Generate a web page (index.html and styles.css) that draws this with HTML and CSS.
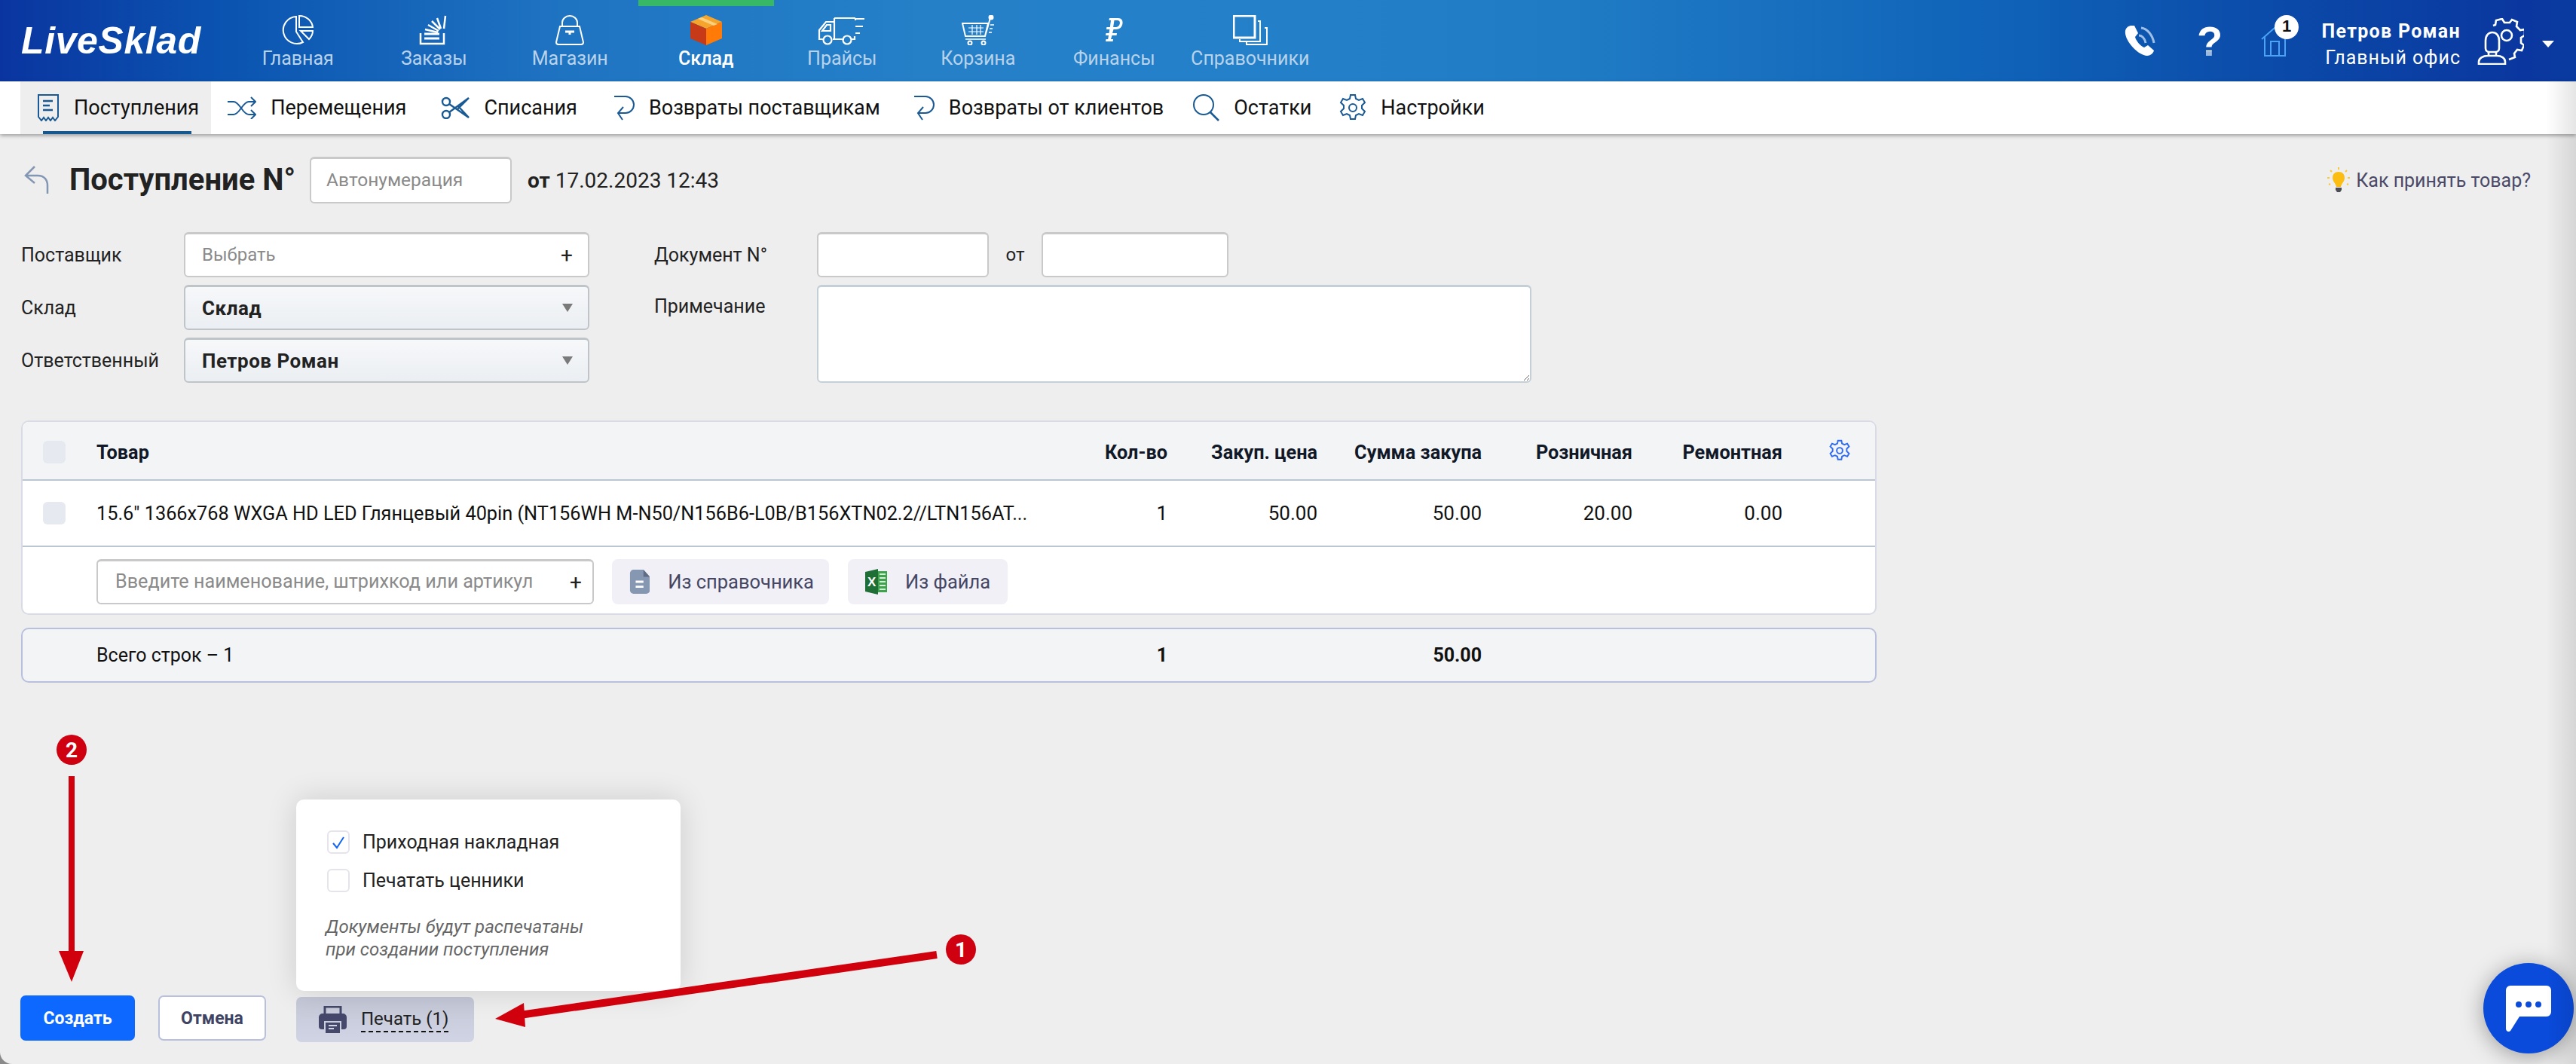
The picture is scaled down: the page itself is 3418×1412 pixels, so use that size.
FILE: index.html
```html
<!DOCTYPE html>
<html lang="ru">
<head>
    <meta charset="UTF-8">
    <title>Поступление</title>
    <link rel="stylesheet" href="styles.css">
</head>
<body>
<div class="page">

    <!--верхнее меню-->
    <header class="top">
        <div class="logo">LiveSklad</div>
        <nav class="nav">
            <a class="nav-item">
                <svg width="44" height="40" viewBox="0 0 44 40" fill="none" stroke="#fff" stroke-width="2"><path d="M20 2a18 18 0 1 0 9 34L20 22z"/><path d="M24 1c10 0 17 7 18 15H24z"/><path d="M26 21h16c0 4-2 8-5 11z"/></svg>
                <span>Главная</span>
            </a>
            <a class="nav-item">
                <svg width="40" height="40" viewBox="0 0 40 40" fill="none" stroke="#fff" stroke-width="3"><path d="M2 24v14h31V24" stroke-width="2.5"/><path d="M7 25h20M7 31h20" stroke-width="3"/><path d="M8 19l17 4M12 13l14 8M17 8l11 11M24 4l5 14M35 1l-2 17" stroke-width="2.5"/></svg>
                <span>Заказы</span>
            </a>
            <a class="nav-item">
                <svg width="40" height="40" viewBox="0 0 40 40" fill="none" stroke="#fff" stroke-width="2"><path d="M10 15V10a10 9 0 0 1 20 0v5"/><path d="M7 15h26l5 21a3 3 0 0 1-3 3H5a3 3 0 0 1-3-3z"/><path d="M14 22h12l-6 0M20 22v4" stroke-width="3"/></svg>
                <span>Магазин</span>
            </a>
            <a class="nav-item nav-item-active">
                <svg width="42" height="40" viewBox="0 0 42 40"><path d="M21 0l21 9-21 9L0 9z" fill="#f6a52c"/><path d="M0 9l21 9v22L0 31z" fill="#c63a17"/><path d="M42 9L21 18v22l21-9z" fill="#ff7a06"/><path d="M10 5l21 9 5-2L15 3z" fill="#fbd07c"/></svg>
                <span>Склад</span>
            </a>
            <a class="nav-item">
                <svg width="64" height="40" viewBox="0 0 64 40" fill="none" stroke="#fff" stroke-width="2.2"><path d="M20 32h15M8 32H2V20l9-11h11v23M22 4v5M22 4h28M50 4v3M44 32h5V28"/><circle cx="13" cy="33" r="5.5"/><circle cx="39" cy="33" r="5.5"/><path d="M50 5h12M50 15h10M50 24h6"/><path d="M6 21l6-8h5v8z"/></svg>
                <span>Прайсы</span>
            </a>
            <a class="nav-item">
                <svg width="44" height="40" viewBox="0 0 44 40" fill="none" stroke="#fff" stroke-width="2"><path d="M1 11h34l-4 17H5zM31 28l7-24"/><circle cx="39" cy="3" r="2.5" fill="#fff"/><path d="M5 32h27" stroke-width="1.5"/><circle cx="11" cy="37" r="2.5"/><circle cx="29" cy="37" r="2.5"/><path d="M9 17h20M9 22h20M14 13v13M20 13v13M25 13v13" stroke-width="1.2"/><path d="M38 13h5M37 18h4M36 23h4" stroke-width="1.4"/></svg>
                <span>Корзина</span>
            </a>
            <a class="nav-item">
                <svg width="24" height="36" viewBox="0 0 24 36" fill="#fff"><path d="M9 2h8.500c4.500 0 6.500 3 6 7-.6 5-4 8-9 8h-3L10 22h6l-.5 3h-6L8 30h3l-.4 3H1l.5-3h2.700l.8-5H1l.5-3h4l.8-5H2l.4-3h4.400L8 5H5.500l.5-3zM12.500 5l-1.400 9h2.900c3 0 5.500-2 5.900-5 .3-2.500-1-4-3.500-4z"/></svg>
                <span>Финансы</span>
            </a>
            <a class="nav-item">
                <svg width="46" height="40" viewBox="0 0 46 40" fill="none" stroke="#fff" stroke-width="2"><rect x="1" y="1" width="28" height="29" stroke-width="3"/><path d="M33 8h3v27H9v-3M42 17h3v22H18v-3"/></svg>
                <span>Справочники</span>
            </a>
        </nav>
        <div class="top-right">
            <svg class="top-phone" width="42" height="44" viewBox="0 0 42 44"><path d="M8 1l5 0 5 10-4 5c1 5 7 12 12 14l5-3 8 7c-1 4-5 7-9 7C18 41-1 20 1 8c1-4 3-6 7-7z" fill="#fff"/><path d="M19 14c4 0 8 4 9 10M22 4c8 1 15 9 17 20" fill="none" stroke="#9fc0e4" stroke-width="3"/></svg>
            <span class="top-help">?</span>
            <div class="top-home">
                <svg width="36" height="40" viewBox="0 0 36 40" fill="none" stroke="#4aa3f5" stroke-width="2"><path d="M1 17L18 2l17 15M5 14v25h27V14M13 39V20h11v19"/></svg>
                <span class="top-badge">1</span>
            </div>
            <div class="user">
                <div class="user-name">Петров Роман</div>
                <div class="user-office">Главный офис</div>
            </div>
            <svg class="user-icon" width="62" height="62" viewBox="0 0 62 62" fill="none" stroke="#fff" stroke-width="2.600"><path d="M21 10l3-1 1-6 8-2 3 5 7 0 3-4 7 3-1 6 5 5 6-1 0 8-5 3 0 7 4 3-3 7-6-1-4 5 1 5-8 3"/><circle cx="39" cy="23" r="7"/><path d="M11 30c0-7 4-11 9-11s9 4 9 11v10c0 3-2 5-5 5h-8c-3 0-5-2-5-5z"/><path d="M15 45v5M25 45v5M14 50h12c6 0 11 3 11 8v3H2v-3c0-5 6-8 12-8z"/></svg>
            <span class="user-caret"></span>
        </div>
    </header>

    <!--подменю-->
    <nav class="sub">
        <a class="sub-item sub-item-active">
            <svg width="30" height="36" viewBox="0 0 30 36" fill="none" stroke="#1a5a94" stroke-width="2"><path d="M2 1h26v29l-4 5-3-4-3 4-3-4-3 4-3-4-3 4-4-5z"/><path d="M8 9h13M8 15h9M8 21h13" stroke-width="2.500"/></svg>
            <span class="sub-label">Поступления</span>
        </a>
        <a class="sub-item">
            <svg width="38" height="30" viewBox="0 0 38 30" fill="none" stroke="#1a5a94" stroke-width="2"><path d="M0 7h8c8 0 12 17 20 17h8M0 24h8c8 0 12-17 20-17h8M31 1l6 6-6 6M31 18l6 6-6 6"/></svg>
            <span class="sub-label">Перемещения</span>
        </a>
        <a class="sub-item">
            <svg width="38" height="30" viewBox="0 0 38 30" fill="none" stroke="#1a5a94" stroke-width="2.400"><circle cx="7" cy="7" r="5"/><circle cx="7" cy="24" r="5"/><path d="M11 10l26 18-14-15M11 21L37 2 21 18"/></svg>
            <span class="sub-label">Списания</span>
        </a>
        <a class="sub-item">
            <svg width="28" height="36" viewBox="0 0 28 36" fill="none" stroke="#1a5a94" stroke-width="2"><path d="M1 3h15c6 0 11 5 11 11s-5 11-11 11H7"/><path d="M13 17l-7 8 6 9"/></svg>
            <span class="sub-label">Возвраты поставщикам</span>
        </a>
        <a class="sub-item">
            <svg width="28" height="36" viewBox="0 0 28 36" fill="none" stroke="#1a5a94" stroke-width="2"><path d="M1 3h15c6 0 11 5 11 11s-5 11-11 11H7"/><path d="M13 17l-7 8 6 9"/></svg>
            <span class="sub-label">Возвраты от клиентов</span>
        </a>
        <a class="sub-item">
            <svg width="36" height="36" viewBox="0 0 36 36" fill="none" stroke="#1a5a94" stroke-width="2"><circle cx="15" cy="14" r="13"/><path d="M24 24l11 11" stroke-width="2.500"/></svg>
            <span class="sub-label">Остатки</span>
        </a>
        <a class="sub-item">
            <svg width="36" height="36" viewBox="0 0 36 36" fill="none" stroke="#1a5a94" stroke-width="2"><path d="M15 1h6l1 5 4 2 5-2 3 5-4 4v4l4 4-3 5-5-2-4 2-1 5h-6l-1-5-4-2-5 2-3-5 4-4v-4L2 11l3-5 5 2 4-2z"/><circle cx="18" cy="18" r="5"/></svg>
            <span class="sub-label">Настройки</span>
        </a>
    </nav>

    <main class="main">
        <div class="title-row">
            <svg class="back" width="34" height="38" viewBox="0 0 34 38" fill="none" stroke="#8397b5" stroke-width="2.500"><path d="M14 1L2 13l12 10M2 13h16c9 0 13 6 13 13v11"/></svg>
            <h1 class="title">Поступление N°</h1>
            <div class="input auto-num"><span class="ph">Автонумерация</span></div>
            <div class="date"><b>от</b> 17.02.2023 12:43</div>
            <a class="help-link">
                <svg width="30" height="34" viewBox="0 0 30 34"><path d="M15 6c5 0 8 3 8 8 0 5-4 7-5 12h-6c-1-5-5-7-5-12 0-5 3-8 8-8z" fill="#fcbd13"/><path d="M11 27h8v3l-2 3h-4l-2-3z" fill="#4d4d55"/><path d="M15 0v3M4 4l2 2M26 4l-2 2M0 14h3M27 14h3M2 23l2-1M28 23l-2-1" stroke="#fcc733" stroke-width="2" fill="none"/></svg>
                <span>Как принять товар?</span>
            </a>
        </div>

        <section class="form">
            <div class="form-col">
                <div class="field">
                    <label class="field-label">Поставщик</label>
                    <div class="input field-box"><span class="ph">Выбрать</span><span class="plus">+</span></div>
                </div>
                <div class="field">
                    <label class="field-label">Склад</label>
                    <div class="input select field-box"><b>Склад</b><i class="arrow-down"></i></div>
                </div>
                <div class="field">
                    <label class="field-label">Ответственный</label>
                    <div class="input select field-box"><b>Петров Роман</b><i class="arrow-down"></i></div>
                </div>
            </div>
            <div class="form-col">
                <div class="field">
                    <label class="field-label">Документ N°</label>
                    <div class="input doc-num"></div>
                    <span class="doc-from">от</span>
                    <div class="input doc-date"></div>
                </div>
                <div class="field field-top">
                    <label class="field-label">Примечание</label>
                    <textarea class="note"></textarea>
                </div>
            </div>
        </section>

        <section class="tbl">
            <div class="tbl-row tbl-head">
                <div class="cell-check"><i class="check"></i></div>
                <div>Товар</div>
                <div class="num">Кол-во</div>
                <div class="num">Закуп. цена</div>
                <div class="num">Сумма закупа</div>
                <div class="num">Розничная</div>
                <div class="num">Ремонтная</div>
                <div class="cell-gear">
                    <svg width="28" height="30" viewBox="0 0 36 36" fill="none" stroke="#2f6bf0" stroke-width="2.500"><path d="M15 1h6l1 5 4 2 5-2 3 5-4 4v4l4 4-3 5-5-2-4 2-1 5h-6l-1-5-4-2-5 2-3-5 4-4v-4L2 11l3-5 5 2 4-2z"/><circle cx="18" cy="18" r="5"/></svg>
                </div>
            </div>
            <div class="tbl-row tbl-item">
                <div class="cell-check"><i class="check"></i></div>
                <div class="name">15.6" 1366x768 WXGA HD LED Глянцевый 40pin (NT156WH M-N50/N156B6-L0B/B156XTN02.2//LTN156AT...</div>
                <div class="num">1</div>
                <div class="num">50.00</div>
                <div class="num">50.00</div>
                <div class="num">20.00</div>
                <div class="num">0.00</div>
                <div></div>
            </div>
            <div class="tbl-add">
                <div class="input add-input"><span class="ph">Введите наименование, штрихкод или артикул</span><span class="plus">+</span></div>
                <a class="add-btn add-dict">
                    <svg width="29" height="34" viewBox="0 0 29 34"><path d="M6 0h14l9 10v19a5 5 0 0 1-5 5H6a5 5 0 0 1-5-5V5a5 5 0 0 1 5-5z" fill="#8697b2"/><path d="M20 0l9 10h-9z" fill="#5e6c84"/><path d="M9 17h11M9 24h11" stroke="#fff" stroke-width="3"/></svg>
                    <span>Из справочника</span>
                </a>
                <a class="add-btn add-file">
                    <svg width="29" height="34" viewBox="0 0 29 34"><path d="M12 3h17v28H12z" fill="#3fa24d"/><path d="M19 7h8M19 12h8M19 17h8M19 22h8M19 27h8" stroke="#d5eed8" stroke-width="2"/><path d="M0 4l17-4v34L0 30z" fill="#1f6e35"/><text x="3" y="23" class="xl-mark">X</text></svg>
                    <span>Из файла</span>
                </a>
            </div>
        </section>

        <section class="tbl-row tbl-total">
            <div></div>
            <div class="total-name">Всего строк – 1</div>
            <div class="num">1</div>
            <div></div>
            <div class="num">50.00</div>
            <div></div>
            <div></div>
            <div></div>
        </section>

        <div class="actions">
            <a class="btn btn-create">Создать</a>
            <a class="btn btn-cancel">Отмена</a>
            <div class="print-wrap">
                <div class="popup">
                    <label class="popup-row"><i class="box"><svg width="22" height="22" viewBox="0 0 22 22" fill="none" stroke="#1366f0" stroke-width="2"><path d="M4 12l5 6 9-14"/></svg></i>Приходная накладная</label>
                    <label class="popup-row"><i class="box"></i>Печатать ценники</label>
                    <p class="popup-note">Документы будут распечатаны<br>при создании поступления</p>
                </div>
                <a class="btn-print">
                    <svg width="37" height="36" viewBox="0 0 37 36"><path d="M8 1h21v11H8z" fill="none" stroke="#45486a" stroke-width="3"/><path d="M5 10h27a5 5 0 0 1 5 5v12a4 4 0 0 1-4 4h-3V20H7v11H4a4 4 0 0 1-4-4V15a5 5 0 0 1 5-5z" fill="#45486a"/><path d="M9 22h19v14H9z" fill="#45486a"/><path d="M13 26h11M13 30h7" stroke="#cfd3e3" stroke-width="2"/></svg>
                    <span class="print-text">Печать (1)</span>
                </a>
            </div>
        </div>
    </main>

    <!--красные стрелки поверх скриншота-->
    <svg class="marks" width="3418" height="1412" viewBox="0 0 3418 1412">
        <path d="M95 1030V1266" stroke="#d0000d" stroke-width="8" fill="none"/>
        <path d="M78 1262h33l-16 41z" fill="#d0000d"/>
        <path d="M1243 1267L690 1347" stroke="#d0000d" stroke-width="10" fill="none"/>
        <path d="M657 1352l38-21 2 32z" fill="#d0000d"/>
        <circle cx="95" cy="995" r="20" fill="#cf0010"/>
        <text x="95" y="1005" class="mark-num">2</text>
        <circle cx="1275" cy="1260" r="20" fill="#cf0010"/>
        <text x="1275" y="1270" class="mark-num">1</text>
    </svg>

    <a class="chat">
        <svg width="60" height="62" viewBox="0 0 60 62"><path d="M6 0h48a6 6 0 0 1 6 6v29a6 6 0 0 1-6 6H18L6 60c-2 2-6 1-6-3V6a6 6 0 0 1 6-6z" fill="#fff"/><circle cx="17" cy="25" r="4" fill="#0a4bdc"/><circle cx="30" cy="25" r="4" fill="#0a4bdc"/><circle cx="43" cy="25" r="4" fill="#0a4bdc"/></svg>
    </a>
    <div class="edge"></div>
</div>
</body>
</html>
```

FILE: styles.css
```css
html{ background: #8a8a8a;}
body{ margin: 0; font-family: Roboto, "Noto Sans", sans-serif; color: #222; font-size: 25px;}
a{ color: inherit; text-decoration: none;}
p,h1{ margin: 0;}
.page{ position: relative; width: 3418px; height: 1412px; overflow: hidden; background: #eee; display: flex; flex-direction: column; border-bottom-left-radius: 16px;}

/* top */
.top{ height: 108px; flex: none; display: flex; align-items: flex-start; color: #fff; background: linear-gradient(90deg, #0a35a0 0, #0b55b1 9%, #1f74c2 22%, #2580c8 36%, #2380c8 52%, #1f7ac4 62%, #0f62b8 78%, #0b4ba9 88%, #0a379f 98%, #0a3a9f 100%);}
.logo{ width: 305px; padding: 25px 0 0 28px; box-sizing: border-box; font: italic bold 50px/58px "Liberation Sans", sans-serif; letter-spacing: .6px;}
.nav{ display: flex;}
.nav-item{ width: 180.5px; height: 108px; box-sizing: border-box; padding-top: 20px; display: flex; flex-direction: column; align-items: center; color: #b8d3ea; font-size: 25px;}
.nav-item svg{ height: 40px; flex: none;}
.nav-item span{ margin-top: 3px; line-height: 30px;}
.nav-item-active{ color: #fff; font-weight: 500; border-top: 8px solid #36b866; padding-top: 12px;}
.top-right{ margin-left: auto; display: flex; align-items: flex-start; position: relative; width: 600px; height: 108px;}
.top-phone{ position: absolute; left: 1px; top: 33px;}
.top-help{ position: absolute; left: 97px; top: 22px; font: bold 56px/66px "Liberation Sans", sans-serif; background: linear-gradient(180deg, #fff 70%, #9db9dd 70%); -webkit-background-clip: text; background-clip: text; color: transparent;}
.top-home{ position: absolute; left: 182px; top: 35px;}
.top-badge{ position: absolute; left: 18px; top: -15px; width: 32px; height: 32px; border-radius: 50%; background: #fff; color: #111; font: bold 22px/30px "Liberation Sans", sans-serif; text-align: center;}
.user{ position: absolute; right: 153px; top: 27px; text-align: right; white-space: nowrap;}
.user-name{ font-weight: 700; font-size: 25px; line-height: 30px; letter-spacing: 1.3px;}
.user-office{ font-size: 25px; line-height: 30px; margin-top: 5px; letter-spacing: 1px;}
.user-icon{ position: absolute; left: 469px; top: 24px;}
.user-caret{ position: absolute; left: 555px; top: 54px; border: 8px solid transparent; border-top: 9px solid #fff; border-bottom: 0;}

/* sub */
.sub{ height: 70px; flex: none; display: flex; padding-left: 27px; background: #fff; box-shadow: 0 2px 5px rgba(0,0,0,.35); position: relative;}
.sub-item{ display: flex; align-items: center; gap: 19px; padding: 0 22px; color: #111; font-size: 27px; white-space: nowrap;}
.sub-item-active{ background: #eee; position: relative; padding-right: 16px;}
.sub-item-active:after{ content: ""; position: absolute; left: 30px; right: 26px; bottom: 0; height: 4px; background: #14588f;}
.sub-item:nth-child(3){ margin-left: 2px;}
.sub-item:nth-child(4){ margin-left: 4px;}
.sub-item:nth-child(6){ margin-left: -6px;}
.sub-item:nth-child(7){ margin-left: -7px;}

/* title */
.main{ flex: 1; min-height: 0; display: flex; flex-direction: column; padding: 0 60px 0 28px;}
.title-row{ display: flex; align-items: center; height: 62px; margin-top: 30px;}
.back{ margin: 0 26px 0 4px; flex: none;}
.title{ font-size: 40px; font-weight: 700; line-height: 46px; color: #222; white-space: nowrap;}
.input{ background: #fff; border: 2px solid #c9c9c9; border-top-width: 3px; border-radius: 6px; box-sizing: border-box; display: flex; align-items: center; justify-content: space-between;}
.ph{ color: #8a8a8a; padding-bottom: 2px;}
.auto-num{ width: 268px; height: 62px; margin-left: 19px; padding: 0 20px; font-size: 24.500px;}
.date{ margin-left: 21px; font-size: 28px; white-space: nowrap; color: #222;}
.help-link{ margin-left: auto; display: flex; align-items: center; gap: 8px; color: #4a4a68; font-size: 25px;}

/* form */
.form{ display: flex; gap: 86px; margin-top: 38px;}
.form-col{ display: flex; flex-direction: column; gap: 10px;}
.field{ display: flex; align-items: center; height: 60px;}
.field-top{ height: 130px; align-items: flex-start;}
.field-label{ width: 216px; flex: none; font-size: 25px; color: #222;}
.field-top .field-label{ padding-top: 14px;}
.field-box{ width: 538px; height: 60px; padding: 0 20px 0 22px; font-size: 24px;}
.select{ background: linear-gradient(180deg, #f6f8fa, #ebeef2); border-color: #bfc4c9; color: #222;}
.select b{ font-size: 26px; letter-spacing: .5px;}
.plus{ color: #222; font-size: 28px;}
.arrow-down{ border: 7px solid transparent; border-top: 11px solid #7a7a7a; border-bottom: 0;}
.doc-num{ width: 228px; height: 60px;}
.doc-from{ width: 70px; text-align: center; font-size: 24px;}
.doc-date{ width: 248px; height: 60px;}
.note{ width: 948px; height: 130px; box-sizing: border-box; margin: 0; background: #fff; border: 2px solid #c5cfd6; border-top-width: 3px; border-radius: 6px;}

/* table */
.tbl{ width: 2462px; margin-top: 50px; border: 2px solid #d8dbe6; border-radius: 10px; background: #fff; box-sizing: border-box; overflow: hidden;}
.tbl-row{ display: grid; grid-template-columns: 98px 1fr 151px 199px 218px 200px 199px 123px; align-items: center; color: #111;}
.tbl-head{ height: 78px; padding-top: 4px; background: #f3f4f6; border-bottom: 2px solid #bcc5d2; font-weight: 700; font-size: 25.300px; box-sizing: border-box; color: #111827;}
.tbl-item{ height: 88px; border-bottom: 2px solid #bcc5d2; box-sizing: border-box; font-size: 26px;}
.num{ text-align: right; white-space: nowrap;}
.name{ white-space: nowrap; font-size: 25.300px;}
.cell-check{ padding-left: 27px;}
.check{ display: block; width: 30px; height: 30px; border-radius: 6px; background: #e6e9f0;}
.cell-gear{ padding-left: 62px; margin-top: -4px; display: flex;}
.tbl-add{ height: 88px; display: flex; align-items: center; padding: 3px 0 0 98px; box-sizing: border-box;}
.add-input{ width: 660px; height: 60px; padding: 0 14px 0 23px; font-size: 25.200px;}
.add-btn{ height: 60px; display: flex; align-items: center; gap: 24px; padding: 0 20px 0 23px; background: #f1f0f7; border-radius: 8px; color: #444663; font-size: 25.500px; white-space: nowrap;}
.add-dict{ margin-left: 24px; width: 288px; box-sizing: border-box;}
.add-file{ margin-left: 25px; width: 212px; box-sizing: border-box;}
.xl-mark{ font: bold 17px "Liberation Sans", sans-serif; fill: #fff;}
.tbl-total{ width: 2462px; height: 73px; margin-top: 17px; box-sizing: border-box; background: #f3f4f6; border: 2px solid #b9c0de; border-radius: 10px; font-size: 25px;}
.total-name{ font-weight: 400;}
.tbl-total .num{ font-weight: 700;}

/* bottom */
.actions{ margin-top: auto; display: flex; align-items: flex-start; margin-left: -1px; height: 91px; box-sizing: border-box;}
.btn{ height: 60px; display: flex; align-items: center; justify-content: center; border-radius: 7px; box-sizing: border-box; font-weight: 700; font-size: 23px;}
.btn-create{ width: 152px; background: #0d68ff; color: #fff;}
.btn-cancel{ width: 143px; margin-left: 31px; background: #fff; border: 2px solid #b9c0de; color: #3f4464;}
.print-wrap{ position: relative; margin-left: 40px; margin-top: 2px;}
.btn-print{ width: 236px; height: 60px; display: flex; align-items: center; gap: 19px; padding-left: 30px; box-sizing: border-box; border-radius: 7px; background: linear-gradient(180deg, #c4c7d6, #d0d4e4); color: #222; font-size: 24px;}
.print-text{ border-bottom: 2px dashed #111; line-height: 32px; white-space: nowrap;}
.popup{ position: absolute; left: 0; bottom: 68px; width: 510px; height: 254px; box-sizing: border-box; padding: 41px 41px 0; background: #fff; border-radius: 10px; box-shadow: 0 0 40px rgba(0,0,0,.14);}
.popup-row{ display: flex; align-items: center; gap: 17px; height: 31px; margin-bottom: 20px; font-size: 25px; color: #222;}
.box{ width: 30px; height: 31px; box-sizing: border-box; border: 2px solid #e4e4ea; border-radius: 6px; display: flex; align-items: center; justify-content: center; flex: none;}
.popup-note{ margin: 31px 0 0 -2px; font-style: italic; font-size: 24px; line-height: 30px; color: #666; white-space: nowrap;}

/* overlay */
.marks{ position: absolute; left: 0; top: 0; pointer-events: none;}
.mark-num{ font: bold 28px Roboto, sans-serif; fill: #fff; text-anchor: middle;}
.chat{ position: absolute; left: 3295px; top: 1278px; width: 120px; height: 120px; border-radius: 50%; background: #0a4bdc; box-shadow: 0 4px 30px rgba(0,0,0,.35); display: flex; align-items: center; justify-content: center;}
.chat svg{ margin: 2px 0 0 0;}
.edge{ position: absolute; right: 0; top: 108px; bottom: 0; width: 40px; background: linear-gradient(90deg, rgba(0,0,0,0), rgba(0,0,0,.1)); pointer-events: none;}
```
